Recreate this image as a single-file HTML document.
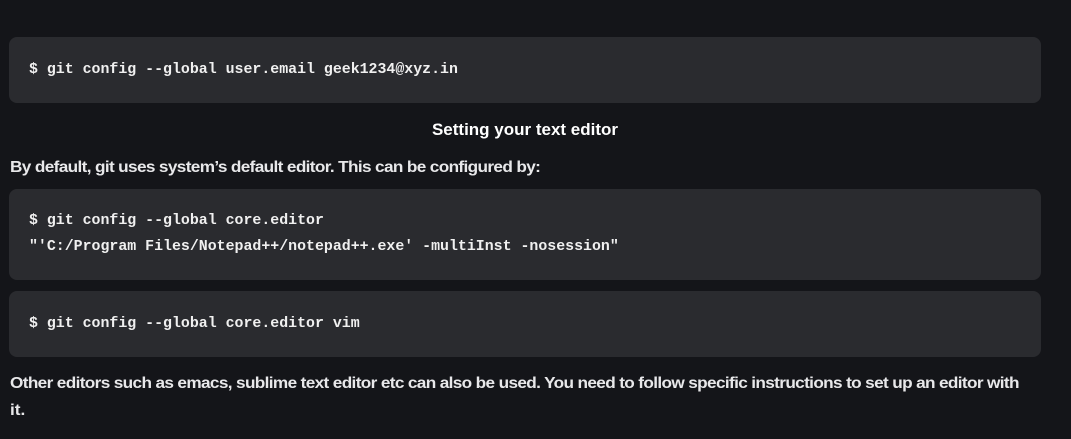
<!DOCTYPE html>
<html><head><meta charset="utf-8"><style>
html,body{margin:0;padding:0;background:#141519;width:1071px;height:439px;overflow:hidden}
body{position:relative;color:#e6e6e8;font-family:"Liberation Sans",sans-serif}
.box{position:absolute;left:9px;width:1032px;background:#2a2b2f;border-radius:8px}
.code{position:absolute;left:29px;font-family:"Liberation Mono",monospace;font-size:14.9px;color:#f0f0f0;white-space:pre;font-weight:bold}
.t{position:absolute;left:10px;font-size:16px;color:#e8e8ea;white-space:nowrap;font-weight:bold;transform-origin:0 0;transform:scaleX(1.075)}
</style></head><body>
<div class="box" style="top:37px;height:66px"></div>
<div class="code" style="top:62px">$ git config --global user.email geek1234@xyz.in</div>
<div style="position:absolute;top:120px;left:0;width:1050px;text-align:center;font-weight:bold;color:#fff;font-size:17px">Setting your text editor</div>
<div class="t" style="top:159px;letter-spacing:-0.6px">By default, git uses system’s default editor. This can be configured by:</div>
<div class="box" style="top:189px;height:91px"></div>
<div class="code" style="top:213px">$ git config --global core.editor</div>
<div class="code" style="top:239px">"'C:/Program Files/Notepad++/notepad++.exe' -multiInst -nosession"</div>
<div class="box" style="top:291px;height:66px"></div>
<div class="code" style="top:316px">$ git config --global core.editor vim</div>
<div class="t" style="top:375px;letter-spacing:-0.6px">Other editors such as emacs, sublime text editor etc can also be used. You need to follow specific instructions to set up an editor with</div>
<div class="t" style="top:402px">it.</div>
</body></html>
